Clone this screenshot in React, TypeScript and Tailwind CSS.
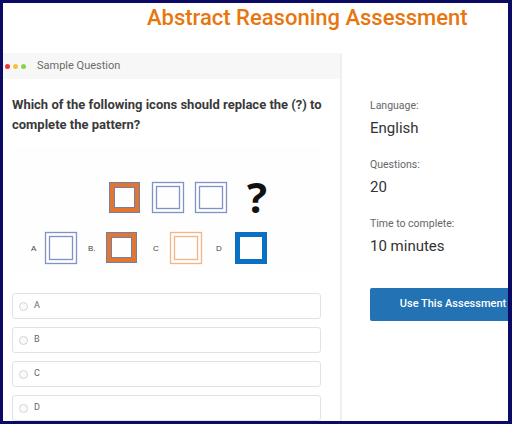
import React from 'react'

const font = { fontFamily: 'Roboto, "Liberation Sans", Arial, sans-serif' }

function Pattern() {
  const blue = '#7f93c4'
  return (
    <svg width="308" height="127" viewBox="0 0 308 127">
      {/* top row */}
      <rect x="97.5" y="35.5" width="30" height="30" fill="none" stroke="#6f80ad" strokeWidth="1" />
      <rect x="100" y="38" width="25" height="25" fill="none" stroke="#e2762f" strokeWidth="4" />
      <rect x="102.5" y="40.5" width="20" height="20" fill="none" stroke="#6f80ad" strokeWidth="1" />

      <rect x="140.5" y="35.5" width="31" height="30" fill="none" stroke={blue} strokeWidth="1.3" />
      <rect x="144.5" y="39.5" width="23" height="22" fill="none" stroke={blue} strokeWidth="1.3" />

      <rect x="183.5" y="35.5" width="31" height="30" fill="none" stroke={blue} strokeWidth="1.3" />
      <rect x="187.5" y="39.5" width="23" height="22" fill="none" stroke={blue} strokeWidth="1.3" />

      <text x="235" y="66" fontSize="42" fontWeight="700" fill="#111" fontFamily='"Open Sans", "Liberation Sans", Arial, sans-serif'>?</text>

      {/* answers */}
      <text x="19" y="104" fontSize="8" fill="#444" fontFamily='"Liberation Sans", Arial, sans-serif'>A</text>
      <rect x="33.5" y="85.5" width="31" height="31" fill="none" stroke={blue} strokeWidth="1.3" />
      <rect x="37.5" y="89.5" width="23" height="23" fill="none" stroke={blue} strokeWidth="1.3" />

      <text x="76" y="104" fontSize="8" fill="#444" fontFamily='"Liberation Sans", Arial, sans-serif'>B.</text>
      <rect x="94.5" y="85.5" width="30" height="30" fill="none" stroke="#6f80ad" strokeWidth="1" />
      <rect x="97" y="88" width="25" height="25" fill="none" stroke="#e2762f" strokeWidth="4" />
      <rect x="99.5" y="90.5" width="20" height="20" fill="none" stroke="#6f80ad" strokeWidth="1" />

      <text x="141" y="104" fontSize="8" fill="#444" fontFamily='"Liberation Sans", Arial, sans-serif'>C</text>
      <rect x="158.5" y="85.5" width="31" height="31" fill="none" stroke="#f3b48a" strokeWidth="1.3" />
      <rect x="162.5" y="89.5" width="23" height="23" fill="none" stroke="#f3b48a" strokeWidth="1.3" />

      <text x="204" y="104" fontSize="8" fill="#444" fontFamily='"Liberation Sans", Arial, sans-serif'>D</text>
      <rect x="225.5" y="87.5" width="27" height="27" fill="none" stroke="#0b6fc2" strokeWidth="5" />
    </svg>
  )
}

function Option({ label }: { label: string }) {
  return (
    <div className="flex h-[26px] items-center rounded-[3px] border border-[#dfe2e6] bg-white pl-[6px]">
      <span className="h-[9px] w-[9px] rounded-full border border-[#d4d4d4] bg-[#fafafa]" />
      <span className="ml-[6px] text-[9px] text-[#666]">{label}</span>
    </div>
  )
}

function Stat({ label, value }: { label: string; value: string }) {
  return (
    <div className="flex flex-col">
      <div className="text-[10.5px] leading-[14px] text-[#666]">{label}</div>
      <div className="mt-[5px] text-[15px] leading-[20px] text-[#333]">{value}</div>
    </div>
  )
}

export default function App() {
  return (
    <div
      className="h-[424px] w-[512px] overflow-hidden border-t-[3px] border-r-[4px] border-b-[3px] border-l-[3px] border-[#0b0b66] bg-white"
      style={font}
    >
      <div className="flex h-full flex-col">
        <h1 className="h-[50px] pl-[144px] pt-[2px] text-[22px] leading-[26px] font-medium whitespace-nowrap text-[#e8760f]">
          Abstract Reasoning Assessment
        </h1>

        <div className="flex flex-1">
          {/* Sample question card */}
          <div className="flex w-[339px] shrink-0 flex-col border-r-2 border-[#efefef] rounded-tr-[3px]">
            <div className="flex h-[26px] items-center bg-[#f7f7f7]">
              <span className="ml-[2px] h-[5px] w-[5px] rounded-full bg-[#e8343c]" />
              <span className="ml-[3px] h-[5px] w-[5px] rounded-full bg-[#f5c33b]" />
              <span className="ml-[3px] h-[5px] w-[5px] rounded-full bg-[#8fd14f]" />
              <span className="ml-[11px] text-[11px] text-[#6b6b6b]">Sample Question</span>
            </div>
            <div className="px-[9px] pt-[16px]">
              <p className="text-[13px] leading-[20px] font-bold text-[#3a3a3a]">
                Which of the following icons should replace the (?) to complete the pattern?
              </p>
              <div className="mt-[12px] w-[308px] bg-[#fefefe]">
                <Pattern />
              </div>
              <div className="mt-[19px] flex w-[309px] flex-col gap-[8px]">
                <Option label="A" />
                <Option label="B" />
                <Option label="C" />
                <Option label="D" />
              </div>
            </div>
          </div>

          {/* Details */}
          <div className="ml-[28px] flex min-w-0 flex-1 flex-col pt-[46px]">
            <div className="flex flex-col gap-[20px]">
              <Stat label="Language:" value="English" />
              <Stat label="Questions:" value="20" />
              <Stat label="Time to complete:" value="10 minutes" />
            </div>
            <button className="mt-[32px] flex h-[33px] w-[166px] shrink-0 items-center justify-center rounded-[2px] bg-[#2372b4] text-[11px] font-medium text-white">
              Use This Assessment
            </button>
          </div>
        </div>
      </div>
    </div>
  )
}
